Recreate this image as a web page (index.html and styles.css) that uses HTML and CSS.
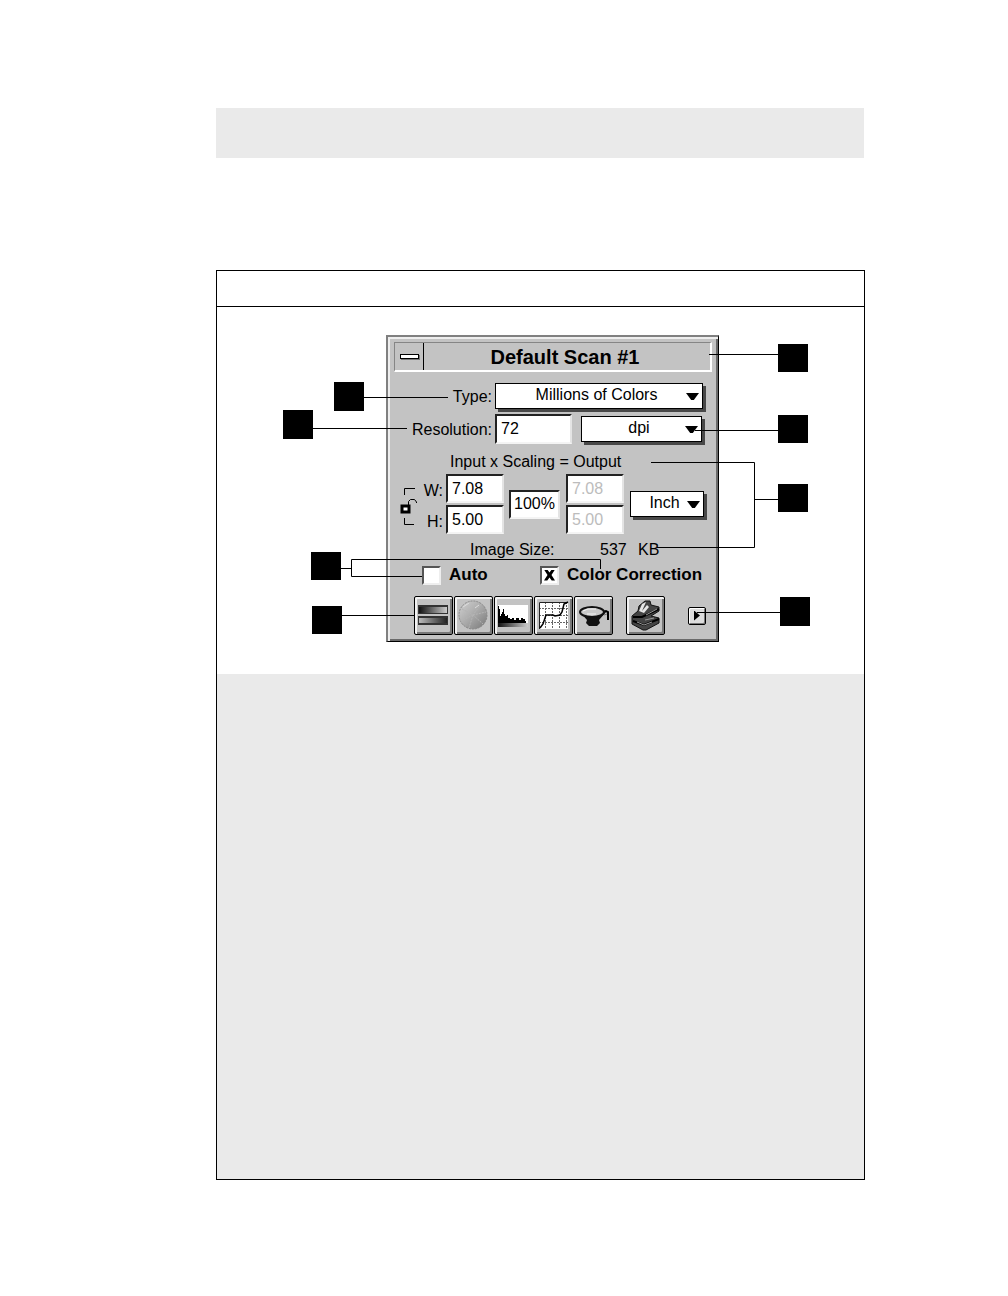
FILE: index.html
```html
<!DOCTYPE html>
<html lang="en">
<head>
<meta charset="utf-8">
<title>Default Scan #1</title>
<link rel="stylesheet" href="styles.css">
</head>
<body>
<main class="page">
  <div class="band"></div>
  <section class="figure">
    <div class="figure-head"></div>
    <div class="figure-art">
      <div class="stage">
        <form class="dialog">
          <header class="titlebar">
            <button type="button" class="sysmenu" aria-label="Window menu"><span class="sysmenu-bar"></span></button>
            <h1 class="title">Default Scan #1</h1>
          </header>
          <div class="row row-type">
            <label class="label" for="type">Type:</label>
            <span class="drop drop-type"><select id="type"><option>Millions of Colors</option></select></span>
          </div>
          <div class="row row-res">
            <label class="label" for="res">Resolution:</label>
            <input class="field field-res" id="res" value="72">
            <span class="drop drop-dpi"><select aria-label="Resolution unit"><option>dpi</option></select></span>
          </div>
          <h2 class="caption">Input x Scaling = Output</h2>
          <div class="measures">
            <svg class="lock" viewBox="0 0 18 60" aria-hidden="true">
              <path d="M15 14.500H4.500V21M4.500 44V50.500H14" fill="none" stroke="#000"/>
              <path d="M8.500 31V27.500L10.500 25.500H14.500L16.500 28V29" fill="none" stroke="#000"/>
              <rect x="2" y="32" width="7" height="6" fill="#fff" stroke="#000" stroke-width="3"/>
            </svg>
            <div class="stack stack-labels"><label for="w">W:</label><label for="h">H:</label></div>
            <div class="stack">
              <input class="field" id="w" value="7.08">
              <input class="field" id="h" value="5.00">
            </div>
            <input class="field field-scale" aria-label="Scaling" value="100%">
            <div class="stack stack-output">
              <input class="field" aria-label="Output width" value="7.08" disabled>
              <input class="field" aria-label="Output height" value="5.00" disabled>
            </div>
            <span class="drop drop-unit"><select aria-label="Unit"><option>Inch</option></select></span>
          </div>
          <div class="size"><span class="size-label">Image Size:</span><span class="size-value">537</span><span>KB</span></div>
          <div class="checks">
            <label class="check check-auto"><input type="checkbox">Auto</label>
            <label class="check"><input type="checkbox" checked>Color Correction</label>
          </div>
          <div class="tools">
            <button type="button" class="tool" aria-label="Range">
              <svg viewBox="0 0 33 33">
                <defs>
                  <linearGradient id="dark"><stop offset="0" stop-color="#111"/><stop offset="1" stop-color="#ccc"/></linearGradient>
                  <linearGradient id="light"><stop offset="0" stop-color="#bbb"/><stop offset="1" stop-color="#222"/></linearGradient>
                </defs>
                <path d="M1 6h30v9H1zM1 17h30v9H1z" fill="#333"/>
                <path d="M2 8h28v6H2z" fill="url(#dark)"/><path d="M2 19h28v5H2z" fill="url(#light)"/>
              </svg>
            </button>
            <button type="button" class="tool" aria-label="Color wheel">
              <svg viewBox="0 0 33 33">
                <defs><linearGradient id="disc" x2="1" y2="1"><stop offset="0" stop-color="#d2d2d2"/><stop offset=".5" stop-color="#aaa"/><stop offset="1" stop-color="#777"/></linearGradient></defs>
                <circle cx="16" cy="16" r="14" fill="url(#disc)" stroke="#888" stroke-dasharray="2 1"/>
                <path d="M5 10l11 6 8-11M16 16l13-3M16 16L4 22M16 16l-4 13M16 16l10 9" stroke="#b4b4b4" stroke-dasharray="2 1" fill="none"/>
                <path d="M6 8l6-4M18 9l4-3" stroke="#ddd"/>
              </svg>
            </button>
            <button type="button" class="tool" aria-label="Histogram">
              <svg viewBox="0 0 33 33">
                <path d="M1 6h30v22H1z" fill="#fff"/>
                <path d="M1 24V7h1v3h1v7h1v-2h1v-2h1v-3h1v5h1v2h2v-1h1v3h2v1h2v-1h2v2h2v-2h3v2h2v-2h2v1h2v2h1v3z" fill="#000"/>
                <path d="M1 24h30v4H1z" fill="url(#dark)"/>
              </svg>
            </button>
            <button type="button" class="tool" aria-label="Curves">
              <svg viewBox="0 0 33 33">
                <path d="M2 3h29v27H2z" fill="#fff"/>
                <path d="M8.500 3v27M15.500 3v27M22.500 3v27M29.500 3v27M2 9.500h29M2 16.500h29M2 23.500h29" stroke="#666" stroke-dasharray="2 1"/>
                <path d="M2.500 30V3.500H31" fill="none" stroke="#222"/>
                <path d="M3 29l3-4 3-9h7l2 1 5-1 2-3 2-8 4-2" fill="none" stroke="#000" stroke-width="1.500"/>
              </svg>
            </button>
            <button type="button" class="tool" aria-label="Filter">
              <svg viewBox="0 0 33 33">
                <path d="M3 13l7 8-1 3 3 3h8l3-3-1-3 7-8z" fill="#111"/>
                <path d="M25 13l4-1 2 1v8" fill="none" stroke="#000" stroke-width="2"/>
                <path d="M27 16l3-1" stroke="#777"/>
                <ellipse cx="15" cy="13" rx="12" ry="5" fill="#c8c8c8" stroke="#111" stroke-width="2"/>
                <path d="M6 12l5-2h8M10 15h9" stroke="#f4f4f4" fill="none"/>
              </svg>
            </button>
            <button type="button" class="tool tool-apart" aria-label="Scanner">
              <svg viewBox="0 0 33 33">
                <path d="M3 17l6-5 1-5 6-5h5l1 4 8 2v4l-8 5 8 2v5L17 31h-3L3 25z" fill="#444" stroke="#111"/>
                <path d="M10 12l3-7 4-2-4 9 5-6 2 2-5 6z" fill="#e6e6e6"/>
                <path d="M4 18h9l17-8M4 22l11 4 15-6" fill="none" stroke="#000" stroke-width="2"/>
                <path d="M17 16l11-6M16 21l9-2M8 23l7 3 8-3" stroke="#999" fill="none"/>
              </svg>
            </button>
            <button type="button" class="more" aria-label="More"></button>
          </div>
        </form>
        <svg class="callouts" viewBox="283 335 528 307" aria-hidden="true">
          <g fill="#000">
            <rect x="334" y="382" width="30" height="29"/>
            <rect x="283" y="410" width="30" height="29"/>
            <rect x="311" y="552" width="30" height="28"/>
            <rect x="312" y="606" width="30" height="28"/>
            <rect x="778" y="344" width="30" height="28"/>
            <rect x="778" y="415" width="30" height="28"/>
            <rect x="778" y="484" width="30" height="28"/>
            <rect x="780" y="597" width="30" height="29"/>
          </g>
          <path fill="none" stroke="#000" d="M364 397.500H448M313 428.500H407M709 354.500H778M695 430.500H778M651 462.500H754.500V547.500H657M754.500 499.500H778M341 568.500H351.500M600.500 569V559.500H351.500V576.500H422M342 615.500H414M697 612.500H780"/>
        </svg>
      </div>
    </div>
    <div class="figure-notes"></div>
  </section>
</main>
</body>
</html>
```
FILE: styles.css
```css
* { box-sizing: border-box; }

body {
  margin: 0;
  background: #fff;
  color: #000;
  font: 16px/20px "Liberation Sans", Arial, sans-serif;
}

.page { padding: 108px 143px 116px 216px; }

.band {
  height: 50px;
  margin: 0 1px 112px 0;
  background: #eaeaea;
}

.figure { border: 1px solid #000; }
.figure-head { height: 36px; border-bottom: 1px solid #000; }
.figure-art { padding: 28px 0 32px 169px; }
.figure-notes { height: 505px; background: #eaeaea; }

.stage { position: relative; width: 333px; }

.callouts {
  position: absolute;
  top: 0;
  left: -103px;
  width: 528px;
  height: 307px;
  pointer-events: none;
}

.dialog {
  padding: 5px 6px 6px;
  background: #c3c3c3;
  border: solid #808080;
  border-width: 2px 1px 1px 2px;
  border-right-color: #000;
  border-bottom-color: #000;
  box-shadow: inset 2px 2px #eee, inset -2px -2px #6a6a6a;
}

.titlebar {
  display: flex;
  height: 30px;
  border: 1px solid #858585;
  border-right: 2px solid #fff;
  border-bottom: 2px solid #fff;
}

.sysmenu {
  display: grid;
  place-items: center;
  width: 29px;
  padding: 0;
  background: none;
  border: 0;
  border-right: 1px solid #000;
}

.sysmenu-bar {
  width: 19px;
  height: 5px;
  background: #fff;
  border: 1px solid #000;
  box-shadow: 1px 1px #777;
}

.title {
  flex: 1;
  margin: 0;
  padding-right: 4px;
  font-size: 20px;
  font-weight: bold;
  line-height: 28px;
  text-align: center;
}

.row { display: flex; align-items: center; }
.row-type { height: 26px; margin-top: 11px; }
.row-res { height: 30px; margin-top: 5px; }
.label { width: 98px; margin-right: 3px; padding-top: 2px; text-align: right; }

.field {
  width: 58px;
  height: 29px;
  padding: 0 4px;
  border: 2px solid #222;
  border-right-color: #e4e4e4;
  border-bottom-color: #f4f4f4;
  border-radius: 0;
  background: #fff;
  color: #000;
  font: inherit;
}
.field:disabled { color: #bcbcbc; }
.field-res { width: 77px; height: 30px; }
.field-scale { width: 51px; padding: 0 3px; }

.drop {
  position: relative;
  height: 26px;
  box-shadow: 3px 3px #484848;
}
.drop select {
  display: block;
  width: 100%;
  height: 100%;
  padding: 0 5px 3px 0;
  appearance: none;
  border: 1px solid #000;
  border-radius: 0;
  background: #fff;
  color: #000;
  font: inherit;
  text-align-last: center;
}
.drop::after {
  content: "";
  position: absolute;
  top: 10px;
  right: 4px;
  width: 13px;
  height: 7px;
  background: #000;
  clip-path: polygon(0 0, 100% 0, 60% 100%, 40% 100%);
}
.drop-type { width: 208px; }
.drop-dpi { width: 121px; margin-left: 9px; }
.drop-unit { width: 74px; }

.caption {
  margin: 6px 0 0 56px;
  font-size: 16px;
  font-weight: normal;
  line-height: 24px;
}

.measures { display: flex; align-items: center; padding-left: 6px; }
.lock { width: 18px; height: 60px; }
.stack { display: grid; gap: 2px; }
.stack label { height: 29px; padding-top: 2px; line-height: 29px; }
.stack-labels { width: 28px; padding-right: 3px; text-align: right; }
.measures .field-scale { margin: 0 6px 0 5px; }
.stack-output { margin-right: 6px; }

.size { display: flex; margin: 4px 0 0 76px; line-height: 24px; }
.size-label { width: 130px; }
.size-value { width: 38px; }

.checks { display: flex; height: 20px; margin: 3px 0 0 28px; }
.check {
  display: flex;
  align-items: center;
  gap: 8px;
  font-size: 17px;
  font-weight: bold;
  white-space: nowrap;
}
.check-auto { width: 118px; }
.check input {
  width: 19px;
  height: 19px;
  margin: 0;
  appearance: none;
  background: #fff;
  border: 2px solid #555;
  border-right-color: #eee;
  border-bottom-color: #eee;
}
.check input:checked::before {
  content: "";
  display: block;
  width: 11px;
  height: 11px;
  margin: 2px;
  background: #000;
  clip-path: polygon(0 0, 30% 0, 50% 28%, 70% 0, 100% 0, 68% 50%, 100% 100%, 70% 100%, 50% 72%, 30% 100%, 0 100%, 32% 50%);
}

.tools { display: flex; align-items: center; gap: 1px; margin: 11px 0 0 20px; }
.tool {
  width: 39px;
  height: 39px;
  padding: 1px;
  background: #c3c3c3;
  border: 1px solid #000;
  border-radius: 2px;
  box-shadow: inset 2px 2px #f2f2f2, inset -2px -2px #777;
}
.tool svg { display: block; width: 33px; height: 33px; margin: 1px; }
.tool-apart { margin-left: 12px; }
.more {
  display: grid;
  place-items: center;
  width: 18px;
  height: 18px;
  margin-left: 22px;
  padding: 0;
  background: #ddd;
  border: 1px solid #000;
  border-radius: 2px;
  box-shadow: inset 1px 1px #fff, inset -1px -1px #777;
}
.more::before {
  content: "";
  width: 6px;
  height: 10px;
  background: #000;
  clip-path: polygon(0 0, 100% 50%, 0 100%);
}
```
